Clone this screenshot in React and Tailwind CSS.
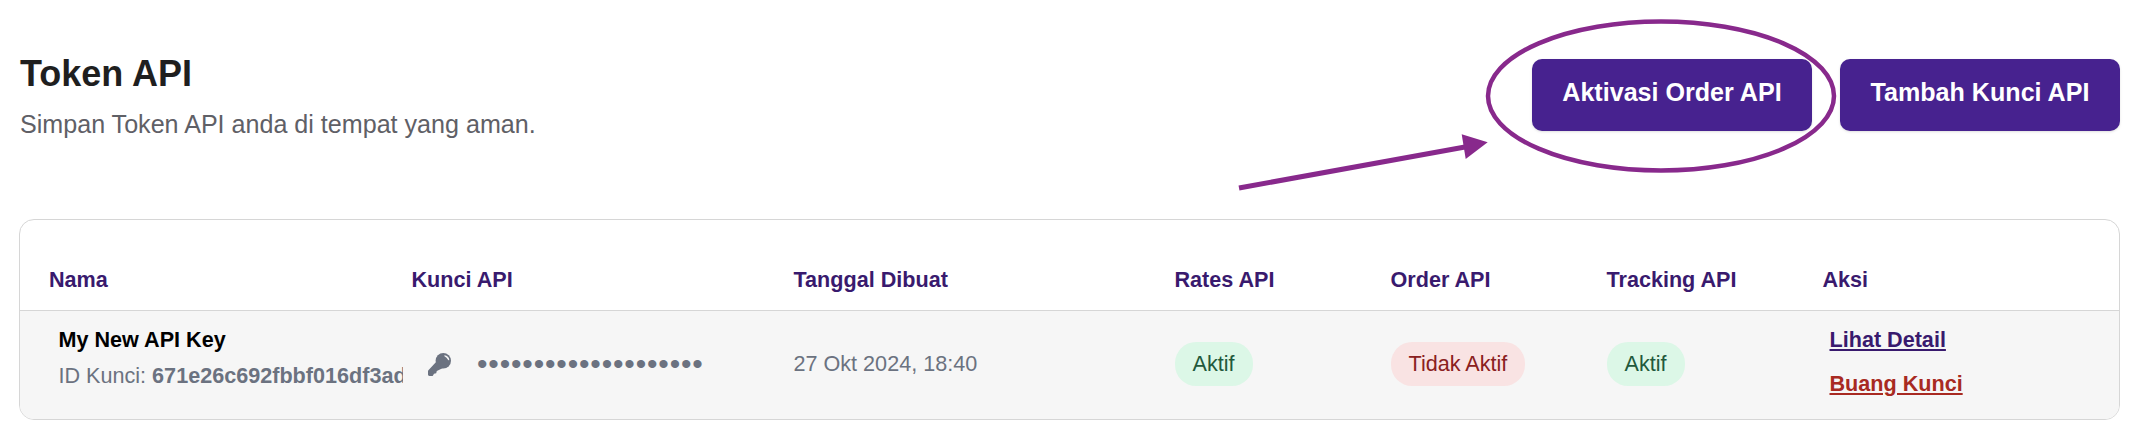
import React from "react";

const cols = "grid grid-cols-[362.5px_382px_381px_216px_216px_216px_1fr]";

function Badge({ children, red }) {
  return (
    <span className={`inline-flex items-center h-[44px] px-[18px] rounded-[21px] text-[21.6px] ${red ? "bg-[#f9e3e3] text-[#8a2020]" : "bg-[#dcf7e7] text-[#22593c]"}`}>
      {children}
    </span>
  );
}

function Key() {
  return (
    <svg width="23" height="23" viewBox="0 0 23 23" className="shrink-0">
      <ellipse cx="15.3" cy="7.8" rx="7.7" ry="7.8" fill="#6b7280" />
      <path d="M9 8 .4 17.3c-.3.3-.4.6-.4 1V21.6c0 .8.6 1.4 1.4 1.4H4c.5 0 .8-.2 1-.6l1-1.6 2.2-.6.6-2.2L15 15z" fill="#6b7280" />
      <path d="M16.6 2.2c2.6.2 4.5 2 4.7 4.7-.5.5-1.2.2-1.5-.4-.7-1.3-1.7-2.3-3-3-.5-.3-.6-.8-.2-1.3z" fill="#f6f6f6" />
    </svg>
  );
}

export default function App() {
  return (
    <div className="w-[2144px] h-[434px] bg-white font-['Liberation_Sans',Arial,sans-serif] relative overflow-hidden">
      <div className="flex items-start justify-between pl-[20px] pr-[24px] pt-[59px] h-[219px]">
        <div>
          <h1 className="text-[36px] leading-[30px] font-bold text-[#1f1f1f]">Token API</h1>
          <p className="mt-[19px] text-[25.1px] leading-[32px] text-[#5f6066]">Simpan Token API anda di tempat yang aman.</p>
        </div>
        <div className="flex gap-[28px]">
          <button className="w-[280px] h-[72px] pb-[4px] rounded-[10px] bg-[#47228f] text-white text-[25.1px] font-bold shadow-sm">Aktivasi Order API</button>
          <button className="w-[280px] h-[72px] pb-[4px] rounded-[10px] bg-[#47228f] text-white text-[25.1px] font-bold shadow-sm">Tambah Kunci API</button>
        </div>
      </div>

      <div className="ml-[19px] w-[2101px] h-[201px] border border-[#d6d6d6] rounded-[15px] overflow-hidden">
        <div className={`${cols} pl-[29px] h-[91px] items-end pb-[15px] text-[21.6px] leading-[30px] font-bold text-[#391a6e] border-b border-[#d6d6d6]`}>
          <div>Nama</div>
          <div>Kunci API</div>
          <div>Tanggal Dibuat</div>
          <div>Rates API</div>
          <div>Order API</div>
          <div>Tracking API</div>
          <div>Aksi</div>
        </div>
        <div className={`${cols} pl-[29px] h-[108px] pb-[2px] items-center bg-[#f6f6f6]`}>
          <div className="pl-[9.5px] pr-[9px] pb-[12px] min-w-0">
            <div className="text-[21.6px] font-bold text-black leading-[30px]">My New API Key</div>
            <div className="mt-[6px] text-[21.6px] leading-[30px] text-[#6b7280] whitespace-nowrap overflow-hidden">
              ID Kunci: <span className="font-bold">671e26c692fbbf016df3ad00</span>
            </div>
          </div>
          <div className="flex items-center gap-[26px] pl-[16.5px]">
            <Key />
            <span className="text-[30px] leading-none text-[#6b7280] tracking-[0.83px]">••••••••••••••••••••</span>
          </div>
          <div className="text-[21.6px] text-[#6b7280]">27 Okt 2024, 18:40</div>
          <div className="flex"><Badge>Aktif</Badge></div>
          <div className="flex"><Badge red>Tidak Aktif</Badge></div>
          <div className="flex"><Badge>Aktif</Badge></div>
          <div className="pl-[7px] pb-[4px] text-[21.6px] font-bold flex flex-col items-start gap-[14px]">
            <a className="underline leading-[30px] text-[#391a6e]">Lihat Detail</a>
            <a className="underline leading-[30px] text-[#a82a22]">Buang Kunci</a>
          </div>
        </div>
      </div>

      <svg className="absolute left-0 top-0 pointer-events-none" width="2144" height="434" fill="none">
        <ellipse cx="1661" cy="96" rx="173" ry="74.5" stroke="#88298c" strokeWidth="4.5" />
        <line x1="1239" y1="188" x2="1465" y2="147" stroke="#88298c" strokeWidth="5" />
        <polygon points="1487.7,142.3 1461.7,134.3 1465.7,159" fill="#88298c" />
      </svg>
    </div>
  );
}
